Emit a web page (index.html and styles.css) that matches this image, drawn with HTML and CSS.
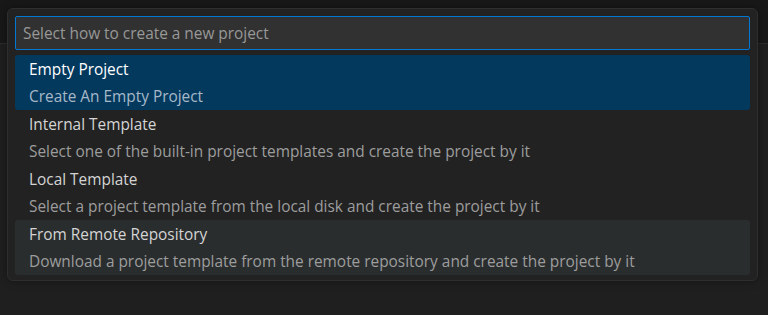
FILE: index.html
```html
<!DOCTYPE html>
<html>
<head>
<meta charset="utf-8">
<link rel="stylesheet" href="styles.css">
</head>
<body>
<div class="app">
  <div class="titlebar"></div>
  <div class="editor"></div>
  <div class="quickpick">
    <div class="input">Select how to create a new project</div>
    <div class="list">
      <div class="item selected">
        <div class="label">Empty Project</div>
        <div class="detail">Create An Empty Project</div>
      </div>
      <div class="item">
        <div class="label">Internal Template</div>
        <div class="detail">Select one of the built-in project templates and create the project by it</div>
      </div>
      <div class="item">
        <div class="label">Local Template</div>
        <div class="detail">Select a project template from the local disk and create the project by it</div>
      </div>
      <div class="item hover">
        <div class="label">From Remote Repository</div>
        <div class="detail">Download a project template from the remote repository and create the project by it</div>
      </div>
    </div>
  </div>
</div>
</body>
</html>
```
FILE: styles.css
```css
html, body {
  margin: 0;
  padding: 0;
  background: #1f1f1f;
  font-family: "Open Sans", "Noto Sans", sans-serif;
}
.app {
  position: relative;
  width: 768px;
  height: 315px;
  overflow: hidden;
}
.titlebar {
  height: 43px;
  background: #181818;
  border-bottom: 1px solid #2b2b2b;
}
.editor {
  height: 271px;
  background: #1f1f1f;
}
.quickpick {
  position: absolute;
  left: 7px;
  top: 8px;
  width: 751px;
  box-sizing: border-box;
  background: #222222;
  border: 1px solid #2e2e2e;
  border-radius: 6px;
  padding: 7px 7px 5px 7px;
  box-shadow: 0 0 8px rgba(0,0,0,0.36);
}
.input {
  height: 34px;
  box-sizing: border-box;
  background: #313131;
  border: 1px solid #0078d4;
  border-radius: 2px;
  color: #989898;
  font-size: 15.4px;
  line-height: 33px;
  padding-left: 7px;
}
.list {
  margin-top: 5px;
  display: flex;
  flex-direction: column;
}
.item {
  height: 55px;
  box-sizing: border-box;
  padding-top: 1px;
  border-radius: 3px;
  padding-left: 14px;
  display: flex;
  flex-direction: column;
}
.label {
  color: #d4d4d4;
  font-size: 15.4px;
  line-height: 27px;
}
.detail {
  color: #9d9d9d;
  font-size: 15.4px;
  line-height: 27px;
}
.selected {
  background: #04395e;
}
.selected .label { color: #ffffff; }
.selected .detail { color: #a6b8c8; }
.hover {
  background: #2a2d2e;
}
```
